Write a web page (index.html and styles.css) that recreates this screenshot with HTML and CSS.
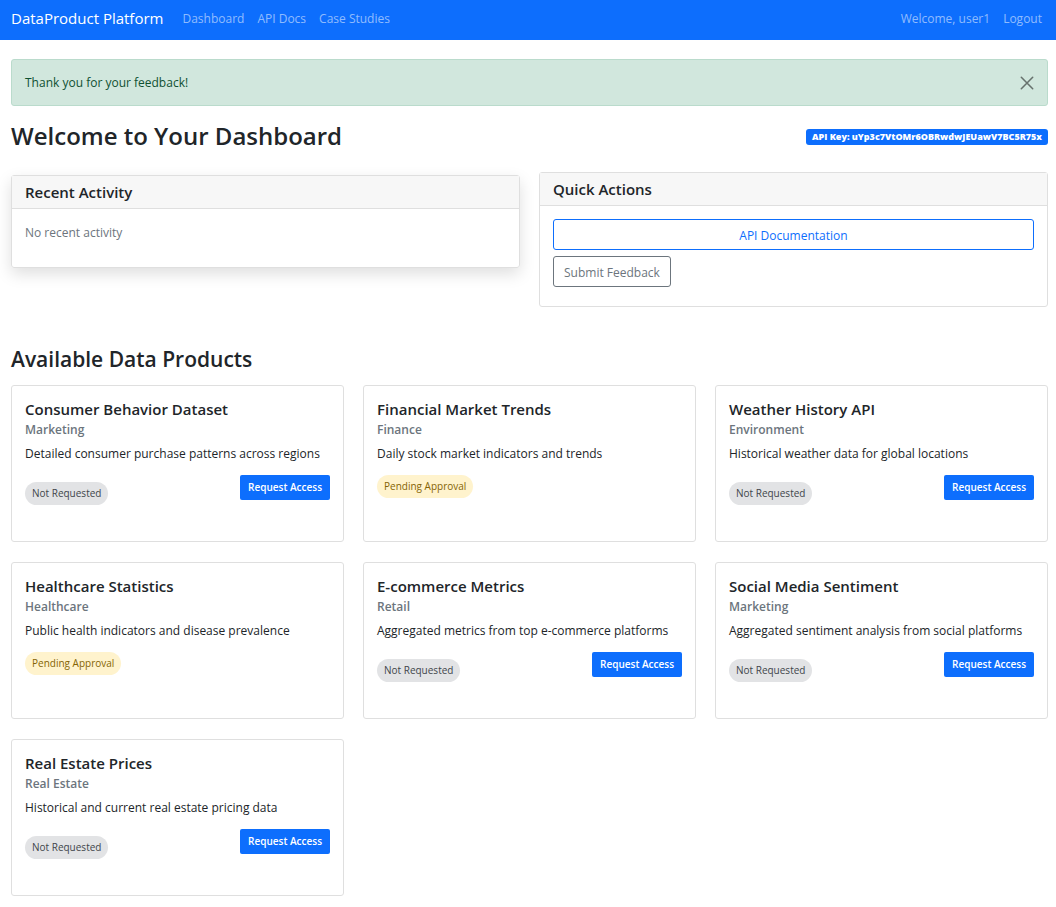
FILE: index.html
```html
<!DOCTYPE html>
<html lang="en">
<head>
<meta charset="utf-8">
<meta name="viewport" content="width=device-width, initial-scale=1">
<title>DataProduct Platform</title>
<link rel="stylesheet" href="styles.css">
</head>
<body>
<nav class="navbar">
  <a class="brand" href="#">DataProduct Platform</a>
  <div class="nav-links">
    <a href="#">Dashboard</a>
    <a href="#">API Docs</a>
    <a href="#">Case Studies</a>
  </div>
  <div class="nav-links nav-user">
    <span>Welcome, user1</span>
    <a href="#">Logout</a>
  </div>
</nav>
<main class="page">
  <div class="alert" role="alert">
    <span>Thank you for your feedback!</span>
    <button class="close" type="button" aria-label="Close">
      <svg viewBox="0 0 16 16" aria-hidden="true"><path d="M1.5 1.5l13 13M14.500 1.500l-13 13"/></svg>
    </button>
  </div>
  <header class="heading">
    <h1>Welcome to Your Dashboard</h1>
    <span class="api-key">API Key: uYp3c7VtOMr6OBRwdwJEUawV7BC5R75x</span>
  </header>
  <div class="panels">
    <section class="panel raised">
      <h2>Recent Activity</h2>
      <div class="panel-body"><p class="muted">No recent activity</p></div>
    </section>
    <section class="panel">
      <h2>Quick Actions</h2>
      <div class="panel-body actions">
        <a class="btn primary" href="#">API Documentation</a>
        <button class="btn secondary" type="button">Submit Feedback</button>
      </div>
    </section>
  </div>
  <h2 class="section-title">Available Data Products</h2>
  <div class="products">
    <article class="product">
      <h3>Consumer Behavior Dataset</h3>
      <h4>Marketing</h4>
      <p>Detailed consumer purchase patterns across regions</p>
      <div class="status-row"><span class="badge idle">Not Requested</span><button class="request" type="button">Request Access</button></div>
    </article>
    <article class="product">
      <h3>Financial Market Trends</h3>
      <h4>Finance</h4>
      <p>Daily stock market indicators and trends</p>
      <div class="status-row"><span class="badge pending">Pending Approval</span></div>
    </article>
    <article class="product">
      <h3>Weather History API</h3>
      <h4>Environment</h4>
      <p>Historical weather data for global locations</p>
      <div class="status-row"><span class="badge idle">Not Requested</span><button class="request" type="button">Request Access</button></div>
    </article>
    <article class="product">
      <h3>Healthcare Statistics</h3>
      <h4>Healthcare</h4>
      <p>Public health indicators and disease prevalence</p>
      <div class="status-row"><span class="badge pending">Pending Approval</span></div>
    </article>
    <article class="product">
      <h3>E-commerce Metrics</h3>
      <h4>Retail</h4>
      <p>Aggregated metrics from top e-commerce platforms</p>
      <div class="status-row"><span class="badge idle">Not Requested</span><button class="request" type="button">Request Access</button></div>
    </article>
    <article class="product">
      <h3>Social Media Sentiment</h3>
      <h4>Marketing</h4>
      <p>Aggregated sentiment analysis from social platforms</p>
      <div class="status-row"><span class="badge idle">Not Requested</span><button class="request" type="button">Request Access</button></div>
    </article>
    <article class="product">
      <h3>Real Estate Prices</h3>
      <h4>Real Estate</h4>
      <p>Historical and current real estate pricing data</p>
      <div class="status-row"><span class="badge idle">Not Requested</span><button class="request" type="button">Request Access</button></div>
    </article>
  </div>
</main>
</body>
</html>
```
FILE: styles.css
```css
* { box-sizing: border-box; }

body {
  margin: 0;
  background: #fff;
  color: #212529;
  font: 12px/20px "Open Sans", "Noto Sans", sans-serif;
}

h1, h2, h3, h4, p { margin: 0; }
a { text-decoration: none; }
button { font-family: inherit; cursor: pointer; }

.navbar {
  display: flex;
  align-items: center;
  height: 40px;
  padding: 0 14px 3px 11px;
  background: #0d6efd;
}
.brand { margin-right: 19px; padding-bottom: 2px; color: #fff; font-size: 15px; line-height: 18px; }
.nav-links { display: flex; gap: 13px; color: rgba(255, 255, 255, 0.55); }
.nav-links a { color: inherit; }
.nav-user { margin-left: auto; }

.page { padding: 19px 8px 11px 11px; }

.alert {
  display: flex;
  align-items: center;
  justify-content: space-between;
  height: 47px;
  padding: 1px 13px 0;
  border: 1px solid #badbcc;
  border-radius: 3px;
  background: #d1e7dd;
  color: #0f5132;
}
.close { display: flex; padding: 0; border: 0; background: none; opacity: 0.5; }
.close svg { width: 14px; height: 14px; fill: none; stroke: #000; stroke-width: 1.8; stroke-linecap: round; }

.heading {
  display: flex;
  align-items: center;
  justify-content: space-between;
  height: 34px;
  margin: 13px 0 19px;
}
h1 { font-size: 24px; line-height: 32px; font-weight: 600; }
.api-key {
  margin-top: 2px;
  padding: 0 6px;
  border-radius: 3px;
  background: #0d6efd;
  color: #fff;
  font-size: 9px;
  line-height: 16px;
  font-weight: 800;
}

.panels { display: grid; grid-template-columns: 1fr 1fr; gap: 19px; align-items: start; }
.panel { border: 1px solid #dfdfdf; border-radius: 3px; }
.panel.raised { margin-top: 3px; box-shadow: 0 6px 16px rgba(0, 0, 0, 0.13); }
.panel h2 {
  padding: 6px 13px;
  border-bottom: 1px solid #dfdfdf;
  background: #f7f7f7;
  font-size: 15px;
  line-height: 20px;
  font-weight: 600;
}
.panel-body { padding: 14px 13px 24px; }
.muted { color: #6c757d; }
.actions { display: flex; flex-direction: column; align-items: flex-start; gap: 6px; padding: 13px 13px 19px; }
.btn {
  padding: 6px 10px 4px;
  border: 1px solid;
  border-radius: 3px;
  background: none;
  font-size: 12px;
  line-height: 19px;
}
.btn.primary { align-self: stretch; color: #0d6efd; text-align: center; }
.btn.secondary { color: #6c757d; }

.section-title { margin: 38px 0 12px; font-size: 21px; line-height: 28px; font-weight: 600; }

.products { display: grid; grid-template-columns: repeat(3, 1fr); gap: 20px 19px; }
.product { min-height: 157px; padding: 13px; border: 1px solid #dfdfdf; border-radius: 3px; }
.product h3 { margin-bottom: 1px; font-size: 15px; line-height: 20px; font-weight: 600; }
.product h4 { color: #6c757d; font-size: 12px; font-weight: 600; }
.product p { margin: 4px 0 11px; }

.status-row { display: flex; align-items: flex-start; justify-content: space-between; }
.badge { padding: 4px 7px; border-radius: 12px; font-size: 10px; line-height: 15px; }
.idle { margin-top: 7px; background: #e2e3e5; color: #41464b; }
.pending { background: #fff3cd; color: #856404; }
.request {
  padding: 3px 8px;
  border: 0;
  border-radius: 2px;
  background: #0d6efd;
  color: #fff;
  font-size: 10px;
  line-height: 19px;
  font-weight: 600;
}
```
